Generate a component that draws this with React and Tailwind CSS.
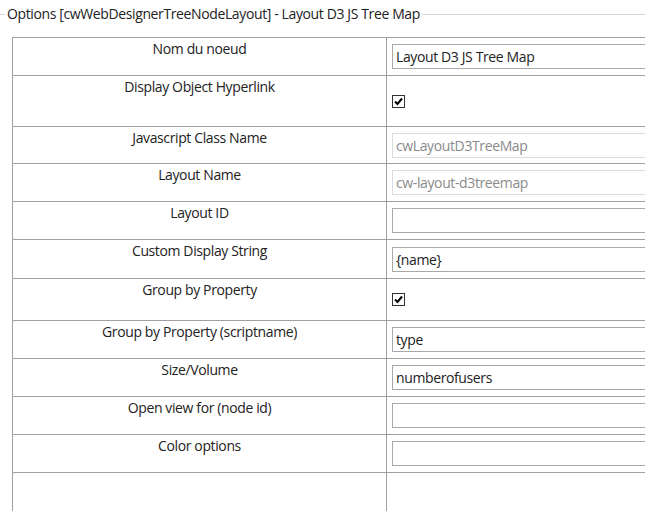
const FONT = "font-['Open_Sans','Noto_Sans',sans-serif]";

const rows = [
  { label: 'Nom du noeud', kind: 'text', value: 'Layout D3 JS Tree Map', h: 'h-[38px]' },
  { label: 'Display Object Hyperlink', kind: 'check', h: 'h-[51px]' },
  { label: 'Javascript Class Name', kind: 'disabled', value: 'cwLayoutD3TreeMap', h: 'h-[37px]' },
  { label: 'Layout Name', kind: 'disabled', value: 'cw-layout-d3treemap', h: 'h-[38px]' },
  { label: 'Layout ID', kind: 'text', value: '', h: 'h-[38px]' },
  { label: 'Custom Display String', kind: 'text', value: '{name}', h: 'h-[39px]' },
  { label: 'Group by Property', kind: 'check', h: 'h-[42px]' },
  { label: 'Group by Property (scriptname)', kind: 'text', value: 'type', h: 'h-[38px]' },
  { label: 'Size/Volume', kind: 'text', value: 'numberofusers', h: 'h-[38px]' },
  { label: 'Open view for (node id)', kind: 'text', value: '', h: 'h-[38px]' },
  { label: 'Color options', kind: 'text', value: '', h: 'h-[38px]' },
];

function Check() {
  return (
    <span className="flex h-[13px] w-[13px] items-center justify-center border border-[#333] bg-white">
      <svg width="9" height="9" viewBox="0 0 9 9">
        <path d="M1 4.5 L3.5 7 L8 1.5" fill="none" stroke="#000" strokeWidth="2" />
      </svg>
    </span>
  );
}

function Field({ row }) {
  if (row.kind === 'check') return <Check />;
  const disabled = row.kind === 'disabled';
  return (
    <input
      readOnly
      value={row.value}
      className={
        'h-[25px] w-[320px] border px-[3px] text-[14px] tracking-[-0.38px] outline-none ' +
        (disabled ? 'border-[#dcdcdc] text-[#8a8a8a]' : 'border-[#a9a9a9] text-[#222]')
      }
    />
  );
}

export default function App() {
  return (
    <div className={`h-[511px] w-[645px] overflow-hidden bg-white pt-[4px] text-[14px] tracking-[-0.38px] text-[#222] ${FONT}`}>
      <fieldset className="-ml-px w-[700px] border-x-0 border-b-0 border-t border-[#d8d8d8] pt-[13px]">
        <legend className="ml-[6px] px-[2px] leading-[20px]">
          Options [cwWebDesignerTreeNodeLayout] - Layout D3 JS Tree Map
        </legend>
        <table className="ml-[13px] w-[760px] border-collapse">
          <tbody>
            {rows.map((r) => (
              <tr key={r.label} className={r.h}>
                <td className="w-[374px] border border-[#a0a0a0] text-center align-top">
                  {r.label}
                </td>
                <td className="border border-[#a0a0a0] pl-[5px] align-middle">
                  <Field row={r} />
                </td>
              </tr>
            ))}
            <tr className="h-[60px]">
              <td className="border border-[#a0a0a0]"></td>
              <td className="border border-[#a0a0a0]"></td>
            </tr>
          </tbody>
        </table>
      </fieldset>
    </div>
  );
}
